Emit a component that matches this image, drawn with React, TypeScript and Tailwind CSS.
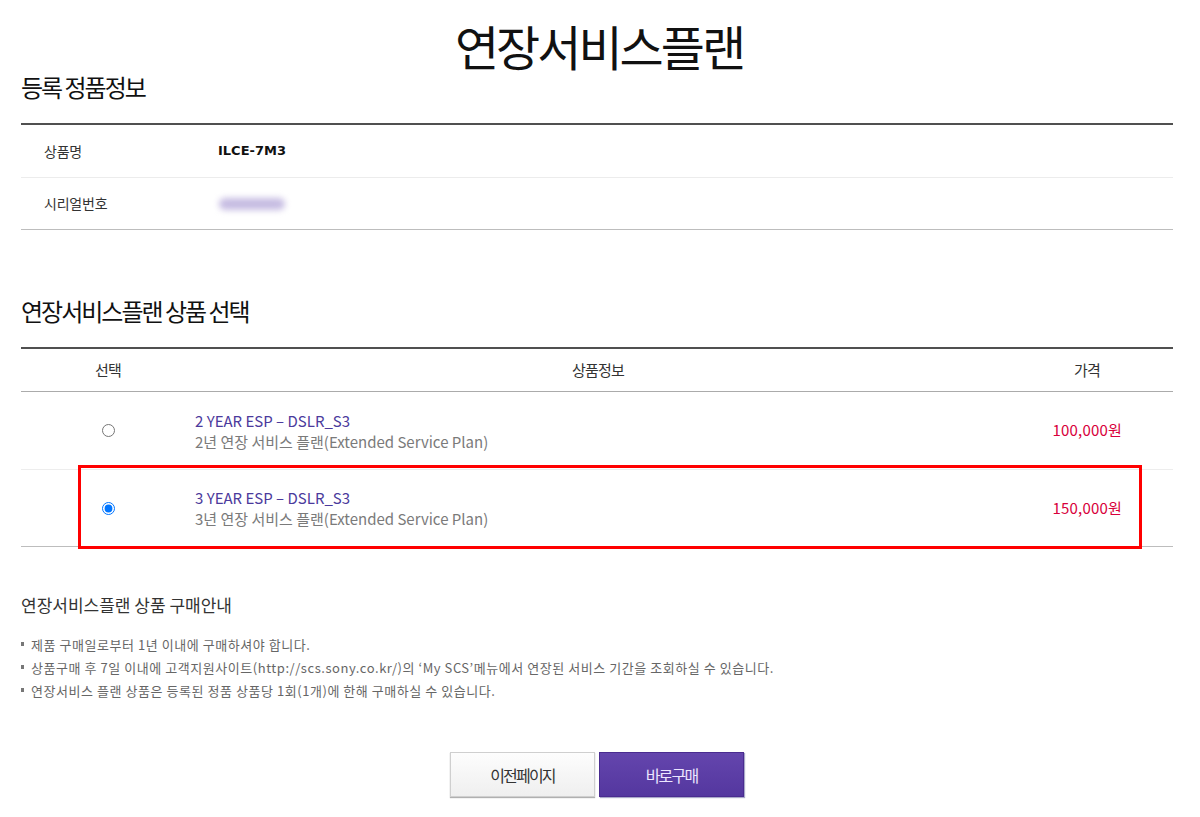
import React from "react";

const KR = "font-['Noto_Sans_CJK_KR','Noto_Sans',sans-serif]";

export default function App() {
  return (
    <div className={`w-[1200px] h-[817px] bg-white text-[#222] ${KR}`}>
      <div className="ml-[21px] w-[1152px]">
        {/* Title */}
        <div className="h-[78px] pt-[18px]">
          <h1 className="text-center text-[48px] leading-[54px] tracking-[-3px] text-[#111] pl-[4px]">
            연장서비스플랜
          </h1>
        </div>

        {/* Registered product heading */}
        <div className="h-[45px]">
          <h2 className="relative -top-[3px] text-[24px] leading-[24px] tracking-[-2px] text-[#111]">등록 정품정보</h2>
        </div>

        <div className="border-t-2 border-[#505050]">
          <div className="h-[53px] flex items-center border-b border-[#ececec]">
            <div className="w-[197px] pl-[23px] text-[14px] tracking-[-0.2px] text-[#333]">상품명</div>
            <div className="text-[13px] font-bold font-['DejaVu_Sans',sans-serif] tracking-[0px] text-[#111]">ILCE-7M3</div>
          </div>
          <div className="h-[52px] flex items-center border-b border-[#bdbdbd]">
            <div className="w-[197px] pl-[23px] text-[14px] tracking-[-0.2px] text-[#333]">시리얼번호</div>
            <div className="w-[66px] h-[12px] ml-[1px] rounded-full bg-[#c6bce2] blur-[3px]" />
          </div>
        </div>

        {/* Plan selection */}
        <div className="h-[117px] pt-[69px]">
          <h2 className="text-[24px] leading-[24px] tracking-[-2px] text-[#111]">연장서비스플랜 상품 선택</h2>
        </div>

        <div className="border-t-2 border-[#505050]">
          <div className="h-[43px] flex items-center border-b border-[#ababab] text-[15px] tracking-[-0.8px] text-[#333]">
            <div className="w-[174px] text-center">선택</div>
            <div className="w-[806px] text-center">상품정보</div>
            <div className="w-[172px] text-center">가격</div>
          </div>

          <div className="h-[78px] flex items-center border-b border-[#ededed]">
            <div className="w-[174px] flex justify-center">
              <input type="radio" name="plan" className="w-[13px] h-[13px] m-0 accent-[#0075ff]" />
            </div>
            <div className="w-[806px] leading-[21px] text-[15px] tracking-[0px]">
              <div className="text-[#4b3a9c]">2 YEAR ESP – DSLR_S3</div>
              <div className="text-[#7a7a7a]">2년 연장 서비스 플랜(Extended Service Plan)</div>
            </div>
            <div className="w-[172px] pr-[51px] text-right text-[15px] tracking-[0.2px] text-[#d8003b]">100,000원</div>
          </div>

          <div className="relative h-[77px] flex items-center border-b border-[#bdbdbd]">
            <div className="w-[174px] flex justify-center">
              <input type="radio" name="plan" defaultChecked className="w-[13px] h-[13px] m-0 accent-[#0075ff]" />
            </div>
            <div className="w-[806px] leading-[21px] text-[15px] tracking-[0px]">
              <div className="text-[#4b3a9c]">3 YEAR ESP – DSLR_S3</div>
              <div className="text-[#7a7a7a]">3년 연장 서비스 플랜(Extended Service Plan)</div>
            </div>
            <div className="w-[172px] pr-[51px] text-right text-[15px] tracking-[0.2px] text-[#d8003b]">150,000원</div>
            <div className="pointer-events-none absolute left-[57px] right-[31px] top-[-5px] bottom-[-3px] border-[3px] border-[#ff0000]" />
          </div>
        </div>

        {/* Guide */}
        <div className="pt-[48px]">
          <h3 className="text-[17px] leading-[20px] tracking-[0px] text-[#333]">연장서비스플랜 상품 구매안내</h3>
        </div>
        <ul className="mt-[18px] text-[13px] leading-[23px] tracking-[0.55px] text-[#666]">
          {[
            "제품 구매일로부터 1년 이내에 구매하셔야 합니다.",
            "상품구매 후 7일 이내에 고객지원사이트(http://scs.sony.co.kr/)의 ‘My SCS’메뉴에서 연장된 서비스 기간을 조회하실 수 있습니다.",
            "연장서비스 플랜 상품은 등록된 정품 상품당 1회(1개)에 한해 구매하실 수 있습니다.",
          ].map((t) => (
            <li key={t} className="flex items-center">
              <span className="w-[3px] h-[4px] bg-[#777] mr-[7px] -mt-[2px] shrink-0" />
              <span>{t}</span>
            </li>
          ))}
        </ul>

        {/* Buttons */}
        <div className="mt-[50px] flex justify-center gap-[4px]">
          <button className="w-[145px] h-[45px] border border-[#cfcfcf] bg-gradient-to-b from-[#fdfdfd] to-[#efefef] shadow-[0_1px_1px_#b0b0b0] text-[16px] tracking-[-1.8px] text-[#333]">
            이전페이지
          </button>
          <button className="w-[145px] h-[45px] border border-[#4a2c90] bg-gradient-to-b from-[#6445ad] to-[#54379f] shadow-[1px_1px_1px_#a9a9c9] text-[16px] tracking-[-1.8px] text-[#ece6ff]">
            바로구매
          </button>
        </div>
      </div>
    </div>
  );
}
